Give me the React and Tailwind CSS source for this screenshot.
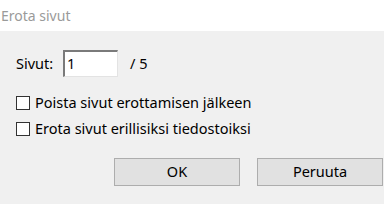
import React from 'react'

const font = { fontFamily: '"Noto Sans", "Open Sans", sans-serif' }

const Checkbox = ({ label }) => (
  <label className="flex items-center h-[26px]">
    <span className="w-[14px] h-[14px] border border-[#333333] bg-white shrink-0"></span>
    <span className="ml-[5px] text-[14.5px] text-black">{label}</span>
  </label>
)

export default function App() {
  return (
    <div className="w-[384px] h-[204px] bg-[#f0f0f0] flex flex-col overflow-hidden" style={font}>
      {/* Title bar */}
      <div className="h-[31px] bg-white flex items-center pl-[1px] shrink-0">
        <span className="text-[14px] text-[#9a9a9a]">Erota sivut</span>
      </div>

      <div className="flex flex-col pl-4 pt-[19px]">
        {/* Pages row */}
        <div className="flex items-center h-[27px]">
          <span className="w-[47px] text-[14.5px] text-black">Sivut:</span>
          <div className="w-[55px] h-[27px] bg-white border-t-2 border-l-2 border-r border-b border-t-[#7a7a7a] border-l-[#7a7a7a] border-r-[#e3e3e3] border-b-[#e3e3e3] flex items-center pl-[2px] text-[14.5px] text-black">
            1
          </div>
          <span className="ml-[12px] text-[14.5px] text-black">/ 5</span>
        </div>

        <div className="mt-[13px] flex flex-col">
          <Checkbox label="Poista sivut erottamisen jälkeen" />
          <Checkbox label="Erota sivut erillisiksi tiedostoiksi" />
        </div>

        {/* Buttons */}
        <div className="mt-4 flex justify-end gap-[17px] pr-[1px]">
          <button className="w-[126px] h-[28px] bg-[#e1e1e1] border border-[#adadad] text-[14.5px] text-black">
            OK
          </button>
          <button className="w-[126px] h-[28px] bg-[#e1e1e1] border border-[#adadad] text-[14.5px] text-black">
            Peruuta
          </button>
        </div>
      </div>
    </div>
  )
}
